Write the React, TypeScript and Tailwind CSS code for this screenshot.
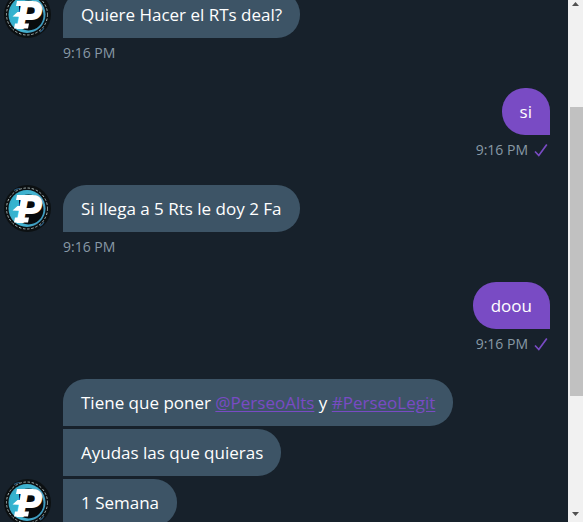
import clsx from "clsx";
import type { ReactNode } from "react";

type Group = {
  id: number;
  mine?: boolean;
  time?: string;
  messages: ReactNode[];
};

const linkClass = "text-[#794bc4] underline underline-offset-2";

const groups: Group[] = [
  { id: 1, time: "9:16 PM", messages: ["Quiere Hacer el RTs deal?"] },
  { id: 2, mine: true, time: "9:16 PM", messages: ["si"] },
  { id: 3, time: "9:16 PM", messages: ["Si llega a 5 Rts le doy 2 Fa"] },
  { id: 4, mine: true, time: "9:16 PM", messages: ["doou"] },
  {
    id: 5,
    messages: [
      <>
        Tiene que poner{" "}
        <a href="#PerseoAlts" className={linkClass}>@PerseoAlts</a> y{" "}
        <a href="#PerseoLegit" className={linkClass}>#PerseoLegit</a>
      </>,
      "Ayudas las que quieras",
      "1 Semana",
    ],
  },
];

function Avatar() {
  return (
    <svg viewBox="0 0 47 47" className="size-[47px] shrink-0" aria-hidden="true">
      <defs>
        <linearGradient id="ring" x1="0" y1="0" x2="1" y2="0.4">
          <stop offset="0" stopColor="#2fa9c6" />
          <stop offset="0.6" stopColor="#45b5d2" />
          <stop offset="1" stopColor="#3f9cc0" />
        </linearGradient>
      </defs>
      <circle cx="23.5" cy="23.5" r="23.5" fill="#0c1012" />
      <path d="M10 5.500l3-1.500 3-.5M36 41l2-1.500 2-2.500" stroke="#2b5c80" strokeWidth="1.200" fill="none" />
      <circle cx="23" cy="23.500" r="20.500" fill="none" stroke="#a9b6b4" strokeWidth="1" strokeDasharray="2.400 1.800" />
      <circle cx="23" cy="23.500" r="18.500" fill="url(#ring)" />
      <circle cx="24.500" cy="24.500" r="15" fill="#080b0d" />
      <path d="M8.500 15Q4.500 24 8.500 31L15 35V15z" fill="#35b3cf" />
      {/* slab serifs and the spur behind the letter */}
      <path d="M13 10h8l-1 5h-8zM11 32.500h14l-1 5H10zM8.500 25.500l5-4.500h6l-1 5z" fill="#fff" />
      <text
        x="13"
        y="36.500"
        fontFamily="Liberation Sans, sans-serif"
        fontWeight="700"
        fontStyle="italic"
        fontSize="36"
        fill="#fff"
        stroke="#fff"
        strokeWidth="2"
      >
        P
      </text>
    </svg>
  );
}

function Check() {
  return (
    <svg viewBox="0 0 14 14" className="size-3.5" fill="none" stroke="#794bc4" strokeWidth="1.700" aria-hidden="true">
      <path d="M1 8.500 4.800 12.500 12.800 1.500" />
    </svg>
  );
}

function MessageGroup({ group }: { group: Group }) {
  const { mine, messages, time } = group;
  return (
    <li className={clsx("flex flex-col", mine ? "items-end" : "items-start")}>
      <div className="flex items-end gap-3">
        {!mine && <Avatar />}
        <div className="flex flex-col items-start gap-[3px]">
          {messages.map((message, i) => (
            <p
              key={i}
              className={clsx(
                "px-[18px] py-3 text-[17px] leading-[23px] text-white",
                mine ? "rounded-[23px] rounded-br-none bg-[#794bc4]" : "rounded-r-[23px] bg-[#3d5466]",
                !mine && i === 0 && "rounded-tl-[23px]"
              )}
            >
              {message}
            </p>
          ))}
        </div>
      </div>
      {time && (
        <div className={clsx("mt-1 flex items-center gap-1.5 text-sm leading-[22px] text-[#8899a6]", mine ? "pr-0.5" : "pl-[59px]")}>
          <time>{time}</time>
          {mine && <Check />}
        </div>
      )}
    </li>
  );
}

function Scrollbar() {
  return (
    <div className="flex w-[15px] shrink-0 flex-col bg-[#f1f1f1] pl-0.5" aria-hidden="true">
      <svg viewBox="0 0 13 17" className="h-[17px] w-full" fill="#505050">
        <path d="M2 6 5.500 2 9 6z" />
      </svg>
      <div className="grow-[90]" />
      <div className="grow-[289] bg-[#c1c1c1]" />
      <div className="grow-[109]" />
      <svg viewBox="0 0 13 17" className="h-[17px] w-full" fill="#505050">
        <path d="M2 7 5.500 11 9 7z" />
      </svg>
    </div>
  );
}

export default function App() {
  return (
    <div className="flex h-screen overflow-hidden bg-[#17212b] font-['Open_Sans','Noto_Sans',sans-serif]">
      <main className="min-w-0 grow overflow-hidden">
        <ul className="-mt-[9px] flex flex-col gap-6 pr-[18px] pl-1">
          {groups.map((group) => (
            <MessageGroup key={group.id} group={group} />
          ))}
        </ul>
      </main>
      <Scrollbar />
    </div>
  );
}
